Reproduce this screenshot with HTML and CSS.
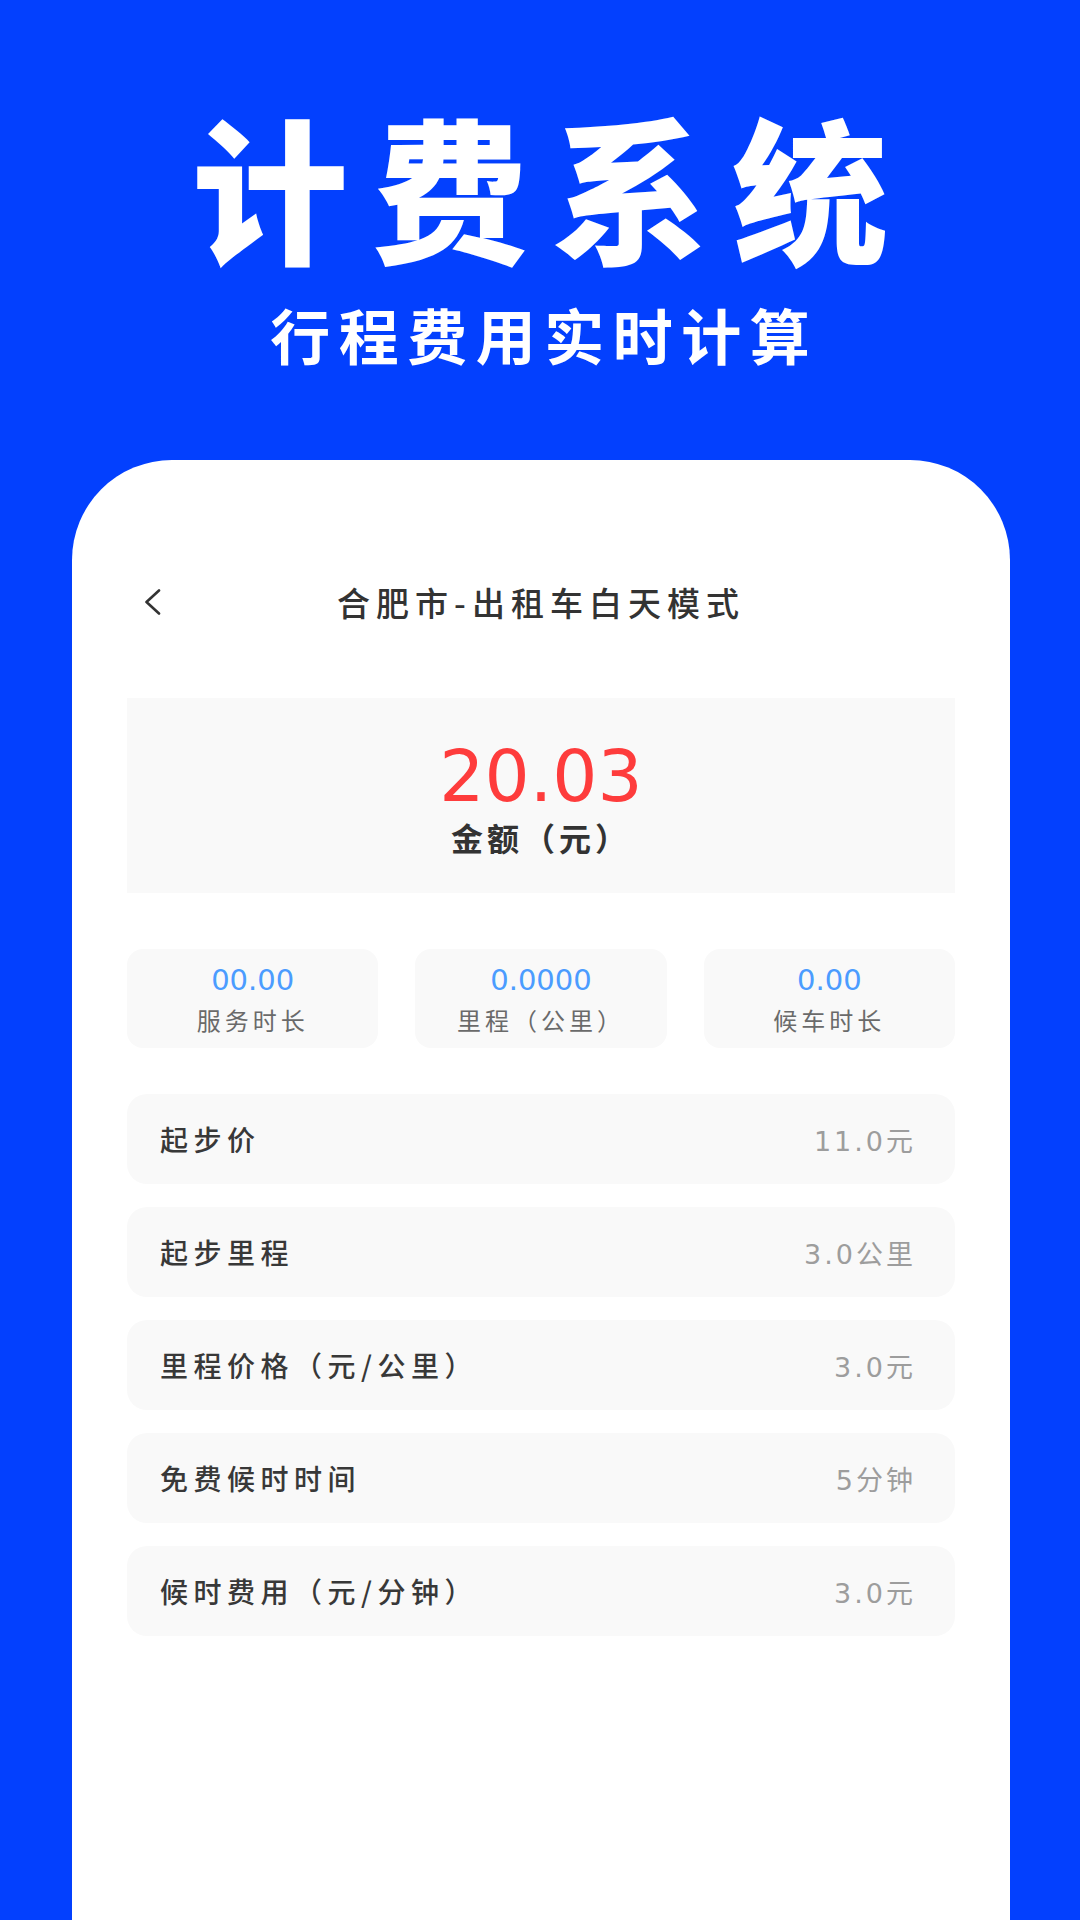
FILE: index.html
```html
<!DOCTYPE html>
<html lang="zh-CN">
<head>
  <meta charset="UTF-8">
  <meta name="viewport" content="width=device-width, initial-scale=1.0">
  <title>计费系统</title>
  <link rel="stylesheet" href="styles.css">
</head>
<body>
  <header class="hero">
    <h1 class="hero-title">计费系统</h1>
    <p class="hero-sub">行程费用实时计算</p>
  </header>

  <main class="panel">
    <div class="nav">
      <span class="nav-back">
        <svg width="20" height="26" viewBox="0 0 20 26">
          <polyline points="16,1.5 3.5,13 16,24.5" fill="none" stroke="#333" stroke-width="2.6" stroke-linecap="round" stroke-linejoin="round"/>
        </svg>
      </span>
      <h2 class="nav-title">合肥市-出租车白天模式</h2>
      <span></span>
    </div>

    <section class="amount">
      <div class="amount-value">20.03</div>
      <div class="amount-label">金额（元）</div>
    </section>

    <section class="stats">
      <div class="stat">
        <div class="stat-value">00.00</div>
        <div class="stat-label">服务时长</div>
      </div>
      <div class="stat">
        <div class="stat-value">0.0000</div>
        <div class="stat-label">里程（公里）</div>
      </div>
      <div class="stat">
        <div class="stat-value">0.00</div>
        <div class="stat-label">候车时长</div>
      </div>
    </section>

    <section class="rules">
      <div class="rule">
        <span class="rule-name">起步价</span>
        <span class="rule-value">11.0元</span>
      </div>
      <div class="rule">
        <span class="rule-name">起步里程</span>
        <span class="rule-value">3.0公里</span>
      </div>
      <div class="rule">
        <span class="rule-name">里程价格（元/公里）</span>
        <span class="rule-value">3.0元</span>
      </div>
      <div class="rule">
        <span class="rule-name">免费候时时间</span>
        <span class="rule-value">5分钟</span>
      </div>
      <div class="rule">
        <span class="rule-name">候时费用（元/分钟）</span>
        <span class="rule-value">3.0元</span>
      </div>
    </section>
  </main>
</body>
</html>
```

FILE: styles.css
```css
body {
  margin: 0;
  min-height: 100vh;
  display: flex;
  flex-direction: column;
  background-color: #0340fe; /* brand blue */
  font-family: "Noto Sans CJK SC", "Noto Sans", sans-serif;
  color: #333;
}

.hero {
  padding-top: 106px;
  text-align: center;
  color: #fff;
}

.hero-title {
  margin: 0;
  font-size: 156px;
  line-height: 156px;
  font-weight: 900;
  letter-spacing: 24px;
  text-indent: 24px;
}

.hero-sub {
  margin: 42px 0 0;
  font-size: 60px;
  line-height: 60px;
  font-weight: 700;
  letter-spacing: 8.5px;
  text-indent: 8.5px;
}

.panel {
  flex: 1;
  margin: 96px 70px 0 72px;
  padding: 112px 55px 0;
  background-color: #fff;
  border-radius: 100px 100px 0 0;
}

.nav {
  display: grid;
  grid-template-columns: 1fr auto 1fr;
  align-items: center;
  height: 60px;
}

.nav-back {
  display: flex;
  margin-left: 16px;
}

.nav-title {
  margin: 0;
  font-size: 33px;
  line-height: 33px;
  font-weight: 500;
  letter-spacing: 6px;
  color: #333;
}

.amount {
  margin-top: 66px;
  padding: 44px 0 40px;
  background-color: #f9f9f9;
  text-align: center;
}

.amount-value {
  font-family: "DejaVu Sans", sans-serif;
  font-size: 71px;
  line-height: 70px;
  color: #fe3c3c;
}

.amount-label {
  margin-top: 9px;
  font-size: 32px;
  line-height: 32px;
  font-weight: 700;
  letter-spacing: 4px;
  color: #333;
}

.stats {
  display: flex;
  gap: 37px;
  margin-top: 56px;
}

.stat {
  flex: 1;
  padding: 17px 0 16px;
  background-color: #f9f9f9;
  border-radius: 16px;
  text-align: center;
}

.stat-value {
  font-family: "DejaVu Sans", sans-serif;
  font-size: 29px;
  line-height: 29px;
  color: #4b9cff;
}

.stat-label {
  margin-top: 13px;
  font-size: 24px;
  line-height: 24px;
  letter-spacing: 4px;
  color: #6a6a6a;
}

.rules {
  display: flex;
  flex-direction: column;
  gap: 23px;
  margin-top: 46px;
}

.rule {
  display: flex;
  align-items: center;
  justify-content: space-between;
  height: 90px;
  padding: 0 39px 0 33px;
  background-color: #f9f9f9;
  border-radius: 20px;
}

.rule-name {
  font-size: 28px;
  font-weight: 500;
  letter-spacing: 5.5px;
  color: #383838;
}

.rule-value {
  font-family: "DejaVu Sans", "Noto Sans CJK SC", sans-serif;
  font-size: 27px;
  letter-spacing: 3px;
  color: #9d9d9d;
}
```
